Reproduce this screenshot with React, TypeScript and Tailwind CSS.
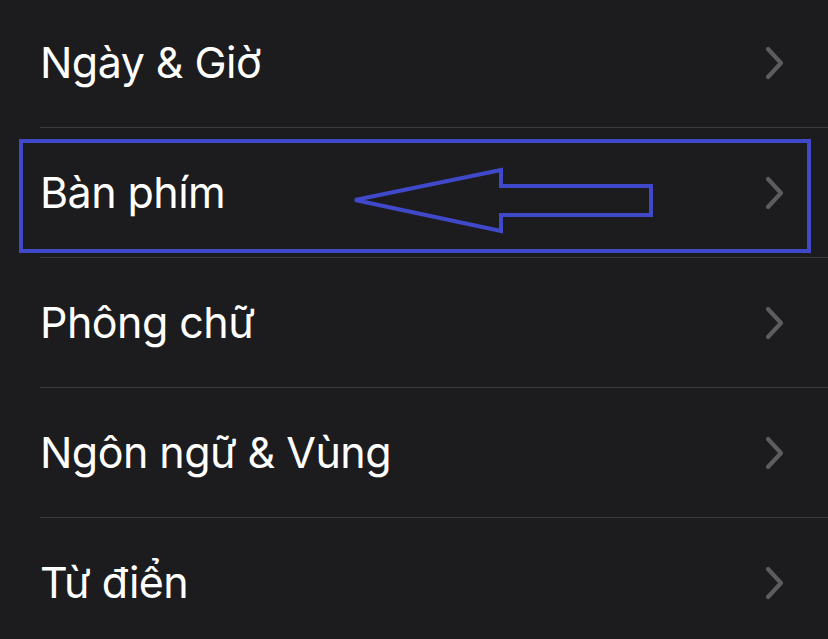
const items = ['Ngày & Giờ', 'Bàn phím', 'Phông chữ', 'Ngôn ngữ & Vùng', 'Từ điển']

function Chevron() {
  return (
    <svg width="22" height="36" viewBox="0 0 22 36" className="shrink-0">
      <polyline points="4,4 17,18 4,32" fill="none" stroke="#5c5c61" strokeWidth="4.2" strokeLinecap="round" strokeLinejoin="round" />
    </svg>
  )
}

export default function App() {
  return (
    <div className="relative w-[828px] h-[639px] overflow-hidden bg-[#1c1c1e]" style={{ fontFamily: 'Inter, "Noto Sans", sans-serif' }}>
      <div className="flex flex-col -mt-[2px]">
        {items.map((label, i) => (
          <div key={label} className="flex flex-col">
            <div className="flex items-center justify-between h-[129px] pl-[40px] pr-[42px]">
              <span className="text-[43px] leading-none text-white tracking-[-0.55px]">{label}</span>
              <Chevron />
            </div>
            {i < items.length - 1 && <div className="ml-[40px] h-px bg-[#3a3a3c]" />}
          </div>
        ))}
      </div>

      {/* annotation overlay */}
      <svg className="absolute left-0 top-0" width="828" height="639" viewBox="0 0 828 639">
        <rect x="21" y="141" width="788" height="110" fill="none" stroke="#4049c9" strokeWidth="4" />
        <polygon points="355,200 501,170 501,186 651,186 651,215 501,215 501,231" fill="none" stroke="#4049c9" strokeWidth="4" strokeLinejoin="miter" />
      </svg>
    </div>
  )
}
